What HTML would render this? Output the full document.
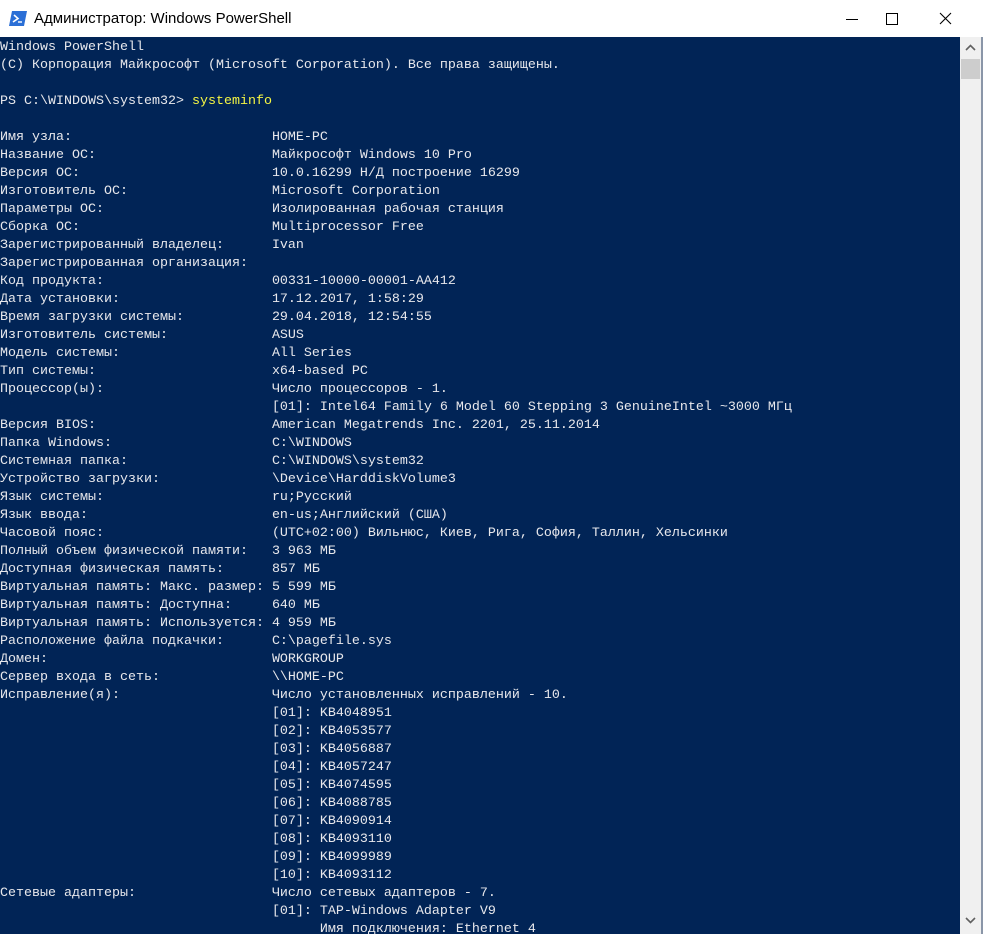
<!DOCTYPE html>
<html><head><meta charset="utf-8"><style>
html,body{margin:0;padding:0;width:983px;height:934px;overflow:hidden;background:#fff}
.title{position:absolute;left:0;top:0;width:983px;height:37px;background:#fff;font-family:"Liberation Sans","DejaVu Sans",sans-serif;font-size:15px;color:#000}
.title .t{position:absolute;left:34px;top:10px}
.con{position:absolute;left:0;top:37px;width:960px;height:897px;background:#012456;overflow:hidden}
pre{margin:0;position:absolute;left:0;top:2px;font-family:"Liberation Mono","DejaVu Sans Mono",monospace;font-size:13.33px;line-height:18px;color:#e8e8ec;white-space:pre}
.y{color:#f5f543}
.sb{position:absolute;left:960px;top:37px;width:21px;height:897px;background:#f0f0f0}
.thumb{position:absolute;left:1px;top:22px;width:19px;height:20px;background:#cdcdcd}
.edge{position:absolute;left:981px;top:37px;width:2px;height:897px;background:#8a96a8}
</style></head><body>
<div class="title">
<svg style="position:absolute;left:9px;top:11px" width="18" height="15" viewBox="0 0 18 15"><path d="M3 0H18L15 15H0Z" fill="#2b6fd6"/><path d="M5 4L9 7.5L4 11" stroke="#fff" stroke-width="1.6" fill="none"/><path d="M9 11H13" stroke="#fff" stroke-width="1.4"/></svg>
<span class="t">Администратор: Windows PowerShell</span>
<svg style="position:absolute;left:820px;top:12px" width="150" height="14" viewBox="0 0 150 14"><path d="M26 7.5H38" stroke="#000"/><rect x="66.5" y="1.5" width="11" height="11" fill="none" stroke="#000"/><path d="M120 1L131 12M131 1L120 12" stroke="#000" stroke-width="1.1"/></svg>
</div>
<div class="con"><pre>Windows PowerShell
(C) Корпорация Майкрософт (Microsoft Corporation). Все права защищены.

PS C:\WINDOWS\system32&gt; <span class="y">systeminfo</span>

Имя узла:                         HOME-PC
Название ОС:                      Майкрософт Windows 10 Pro
Версия ОС:                        10.0.16299 Н/Д построение 16299
Изготовитель ОС:                  Microsoft Corporation
Параметры ОС:                     Изолированная рабочая станция
Сборка ОС:                        Multiprocessor Free
Зарегистрированный владелец:      Ivan
Зарегистрированная организация:
Код продукта:                     00331-10000-00001-AA412
Дата установки:                   17.12.2017, 1:58:29
Время загрузки системы:           29.04.2018, 12:54:55
Изготовитель системы:             ASUS
Модель системы:                   All Series
Тип системы:                      x64-based PC
Процессор(ы):                     Число процессоров - 1.
                                  [01]: Intel64 Family 6 Model 60 Stepping 3 GenuineIntel ~3000 МГц
Версия BIOS:                      American Megatrends Inc. 2201, 25.11.2014
Папка Windows:                    C:\WINDOWS
Системная папка:                  C:\WINDOWS\system32
Устройство загрузки:              \Device\HarddiskVolume3
Язык системы:                     ru;Русский
Язык ввода:                       en-us;Английский (США)
Часовой пояс:                     (UTC+02:00) Вильнюс, Киев, Рига, София, Таллин, Хельсинки
Полный объем физической памяти:   3 963 МБ
Доступная физическая память:      857 МБ
Виртуальная память: Макс. размер: 5 599 МБ
Виртуальная память: Доступна:     640 МБ
Виртуальная память: Используется: 4 959 МБ
Расположение файла подкачки:      C:\pagefile.sys
Домен:                            WORKGROUP
Сервер входа в сеть:              \\HOME-PC
Исправление(я):                   Число установленных исправлений - 10.
                                  [01]: KB4048951
                                  [02]: KB4053577
                                  [03]: KB4056887
                                  [04]: KB4057247
                                  [05]: KB4074595
                                  [06]: KB4088785
                                  [07]: KB4090914
                                  [08]: KB4093110
                                  [09]: KB4099989
                                  [10]: KB4093112
Сетевые адаптеры:                 Число сетевых адаптеров - 7.
                                  [01]: TAP-Windows Adapter V9
                                        Имя подключения: Ethernet 4</pre></div>
<div class="sb"><div class="thumb"></div>
<svg style="position:absolute;left:5px;top:7px" width="11" height="7" viewBox="0 0 11 7"><path d="M1 6L5.5 1.5L10 6" stroke="#606060" stroke-width="1.6" fill="none"/></svg>
<svg style="position:absolute;left:5px;top:880px" width="11" height="7" viewBox="0 0 11 7"><path d="M1 1L5.5 5.5L10 1" stroke="#606060" stroke-width="1.6" fill="none"/></svg>
</div>
<div class="edge"></div>
</body></html>
